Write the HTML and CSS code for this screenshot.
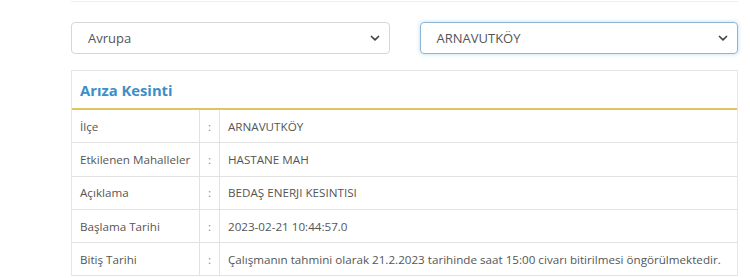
FILE: index.html
```html
<!DOCTYPE html>
<html lang="tr">
<head>
<meta charset="utf-8">
<link rel="stylesheet" href="styles.css">
</head>
<body>
<div class="page">
  <div class="top-box"></div>
  <div class="selects">
    <div class="select">
      <span class="select-text">Avrupa</span>
      <svg class="chev" width="10" height="7" viewBox="0 0 10 7"><path d="M1.5 1.5 L5 4.8 L8.5 1.5" fill="none" stroke="#444" stroke-width="1.7" stroke-linecap="round" stroke-linejoin="round"/></svg>
    </div>
    <div class="select focused">
      <span class="select-text">ARNAVUTKÖY</span>
      <svg class="chev" width="10" height="7" viewBox="0 0 10 7"><path d="M1.5 1.5 L5 4.8 L8.5 1.5" fill="none" stroke="#444" stroke-width="1.7" stroke-linecap="round" stroke-linejoin="round"/></svg>
    </div>
  </div>
  <div class="panel">
    <div class="panel-head">Arıza Kesinti</div>
    <div class="table">
      <div class="row"><div class="c-label">İlçe</div><div class="c-colon">:</div><div class="c-value">ARNAVUTKÖY</div></div>
      <div class="row"><div class="c-label">Etkilenen Mahalleler</div><div class="c-colon">:</div><div class="c-value">HASTANE MAH</div></div>
      <div class="row"><div class="c-label">Açıklama</div><div class="c-colon">:</div><div class="c-value">BEDAŞ ENERJI KESINTISI</div></div>
      <div class="row"><div class="c-label">Başlama Tarihi</div><div class="c-colon">:</div><div class="c-value">2023-02-21 10:44:57.0</div></div>
      <div class="row"><div class="c-label">Bitiş Tarihi</div><div class="c-colon">:</div><div class="c-value">Çalışmanın tahmini olarak 21.2.2023 tarihinde saat 15:00 civarı bitirilmesi öngörülmektedir.</div></div>
    </div>
  </div>
</div>
</body>
</html>
```
FILE: styles.css
```css
html, body {
  margin: 0;
  padding: 0;
  background: #fff;
}
body {
  font-family: "Open Sans", "Noto Sans", sans-serif;
  color: #555;
}
.page {
  width: 667px;
  margin-left: 71px;
}
.top-box {
  height: 1px;
  border-bottom: 1px solid #eee;
}
.selects {
  display: flex;
  gap: 30px;
  margin-top: 20px;
}
.select {
  flex: 1;
  height: 32px;
  box-sizing: border-box;
  border: 1px solid #d6d6d6;
  border-radius: 4px;
  display: flex;
  align-items: center;
  justify-content: space-between;
  padding: 0 9px 0 16px;
  font-size: 13px;
  color: #555;
}
.select.focused {
  border-color: #8fb5d0;
  box-shadow: 0 0 4px rgba(102, 175, 233, 0.45);
}
.chev {
  display: block;
}
.panel {
  margin-top: 16px;
  border: 1px solid #e6e6e6;
  border-bottom: none;
}
.panel-head {
  height: 39px;
  box-sizing: border-box;
  padding: 0 8px;
  display: flex;
  align-items: center;
  font-size: 14.8px;
  font-weight: 700;
  color: #3d8ec7;
  border-bottom: 2px solid #e2c35f;
}
.row {
  display: grid;
  grid-template-columns: 128px 20px 1fr;
  height: 33.3px;
  box-sizing: border-box;
  border-bottom: 1px solid #e2e2e2;
  font-size: 11.65px;
  color: #555;
}
.row > div {
  display: flex;
  align-items: center;
}
.c-label {
  padding-left: 8px;
  border-right: 1px solid #e2e2e2;
}
.c-colon {
  justify-content: center;
  border-right: 1px solid #e2e2e2;
  color: #888;
}
.c-value {
  padding-left: 8px;
  white-space: nowrap;
}
```
